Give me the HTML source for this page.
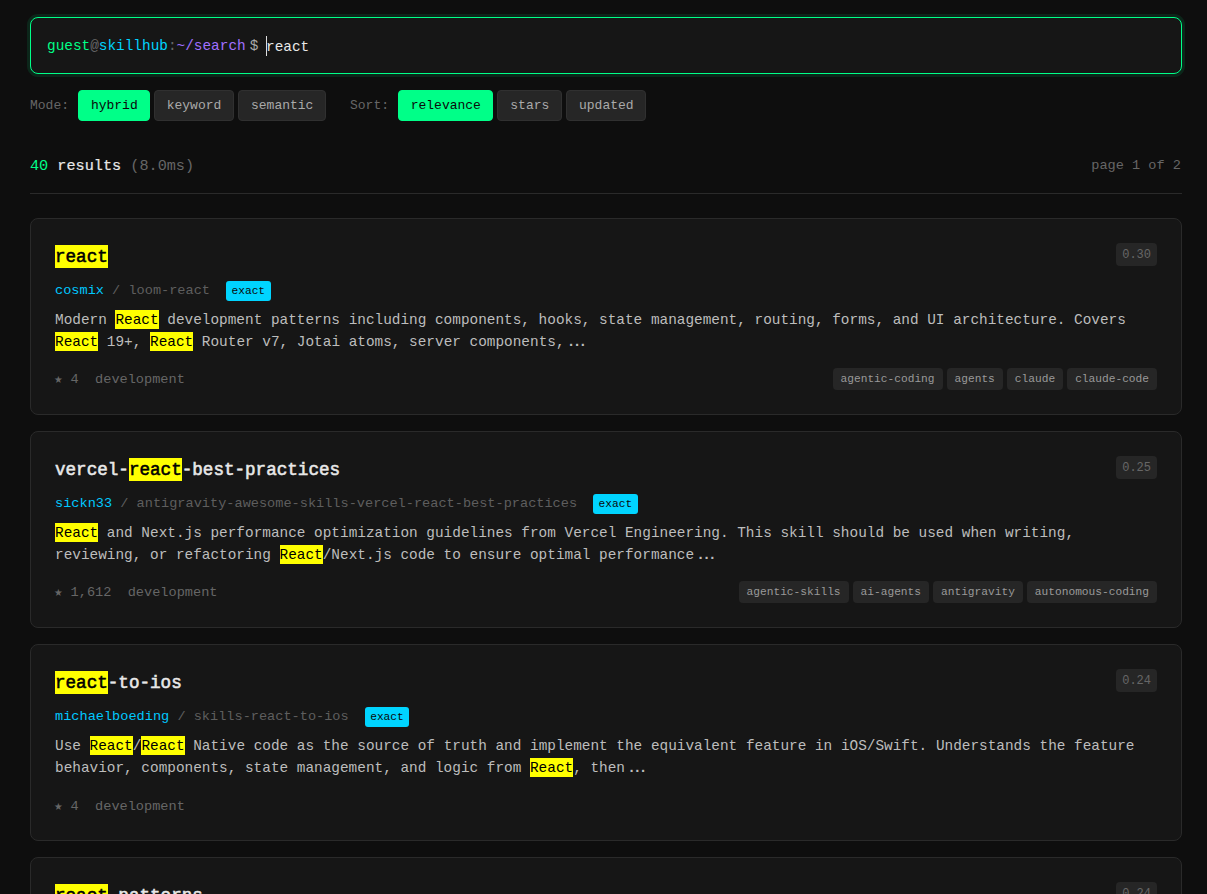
<!DOCTYPE html>
<html><head><meta charset="utf-8">
<style>
*{box-sizing:border-box;margin:0;padding:0}
html,body{width:1207px;height:894px;overflow:hidden;background:#0e0e0e}
body{font-family:"Liberation Mono",monospace;color:#c8c8c8;position:relative}
.abs{position:absolute}
.search{left:30px;top:17px;width:1152px;height:57px;border:1px solid #00ff88;border-radius:8px;background:#161616;box-shadow:0 0 0 3px rgba(0,255,136,0.10)}
.prompt{position:absolute;left:16px;top:1px;height:55px;line-height:55px;font-size:14.4px;white-space:pre}
.g{color:#00ff88}.at{color:#666}.c{color:#00d4ff}.p{color:#a070ff}.dl{color:#aaa}
.caret{display:inline-block;width:1px;height:20px;background:#ddd;vertical-align:middle;position:relative;top:0px}
.row{top:90px;left:30px;height:31px;font-size:13px}
.lbl{position:absolute;top:0;line-height:31px;color:#666}
.btn{position:absolute;top:0;height:31px;line-height:29px;border:1px solid #303030;background:#262626;color:#aaa;border-radius:4px;padding:0 12px;white-space:pre}
.btn.on{background:#00ff88;border-color:#00ff88;color:#0a0a0a}
.res{left:30px;top:155px;font-size:15.2px;line-height:22px;white-space:pre}
.res b{color:#00ff88;font-weight:normal}.res .w{color:#e8e8e8;-webkit-text-stroke:0.2px #e8e8e8}.res .m{color:#666}
.page{right:26px;top:155px;font-size:13.6px;line-height:22px;color:#666}
.hr{left:30px;top:193px;width:1152px;height:1px;background:#2a2a2a}
.card{left:30px;width:1152px;height:197px;border:1px solid #2a2a2a;border-radius:8px;background:#161616}
.title{position:absolute;left:24px;top:25px;font-size:17.6px;line-height:26px;font-weight:normal;-webkit-text-stroke:0.55px currentColor;color:#e8e8e8;white-space:pre}
mark{background:#ffff00;color:#000}
.title mark{padding:2px 0 1px}
.score{position:absolute;right:24px;top:24px;height:23px;line-height:25px;padding:0 6px;background:#262626;color:#666;border-radius:4px;font-size:12px}
.auth{position:absolute;left:24px;top:62px;height:20px;line-height:20px;font-size:13.6px;color:#5e5e5e;white-space:pre}
.auth .c{color:#00c8ff}
.exact{display:inline-block;height:20px;line-height:20px;padding:0 5.5px;background:#00d4ff;color:#0a0a0a;border-radius:3px;font-size:11.2px;vertical-align:top;margin-left:16px}
.desc{position:absolute;left:24px;top:89.5px;width:1104px;font-size:14.4px;line-height:22px;color:#bdbdbd;white-space:pre}
.desc mark{padding:1.5px 0}
.foot{position:absolute;left:23.3px;top:150px;height:22px;line-height:22px;font-size:13.6px;color:#666;white-space:pre}
.tags{position:absolute;right:24px;top:149px;height:22px;display:flex;gap:4px}
.tag{height:22px;line-height:22px;padding:0 8px;background:#262626;color:#999;border-radius:4px;font-size:11.2px;white-space:pre}
.ell{letter-spacing:-2.84px;padding:0 6.22px 0 2.3px;font-weight:bold}
.star{display:inline-block;width:8.16px;text-align:center}
</style></head><body>

<div class="abs search"><div class="prompt"><span class="g">guest</span><span class="at">@</span><span class="c">skillhub</span><span class="at">:</span><span class="p">~/search</span><span class="dl" style="margin-left:4px;margin-right:8px">$</span><span class="caret"></span><span style="color:#e8e8e8;position:relative;top:1px;margin-left:-1.3px">react</span></div></div>

<div class="abs row">
<span class="lbl" style="left:0">Mode:</span>
<span class="btn on" style="left:47.9px;width:72.3px">hybrid</span>
<span class="btn" style="left:123.7px;width:80.5px">keyword</span>
<span class="btn" style="left:208px;width:88px">semantic</span>
<span class="lbl" style="left:320px">Sort:</span>
<span class="btn on" style="left:367.7px;width:95.4px">relevance</span>
<span class="btn" style="left:467.3px;width:64.6px">stars</span>
<span class="btn" style="left:536px;width:79.8px">updated</span>
</div>

<div class="abs res"><b>40</b> <span class="w">results</span> <span class="m">(8.0ms)</span></div>
<div class="abs page">page 1 of 2</div>
<div class="abs hr"></div>

<div class="abs card" style="top:218px">
<div class="title"><mark>react</mark></div>
<div class="score">0.30</div>
<div class="auth"><span class="c">cosmix</span> / loom-react<span class="exact">exact</span></div>
<div class="desc">Modern <mark>React</mark> development patterns including components, hooks, state management, routing, forms, and UI architecture. Covers
<mark>React</mark> 19+, <mark>React</mark> Router v7, Jotai atoms, server components,<span class="ell">...</span></div>
<div class="foot"><span class="star">★</span> 4  development</div>
<div class="tags"><span class="tag">agentic-coding</span><span class="tag">agents</span><span class="tag">claude</span><span class="tag">claude-code</span></div>
</div>

<div class="abs card" style="top:431px">
<div class="title">vercel-<mark>react</mark>-best-practices</div>
<div class="score">0.25</div>
<div class="auth"><span class="c">sickn33</span> / antigravity-awesome-skills-vercel-react-best-practices<span class="exact">exact</span></div>
<div class="desc"><mark>React</mark> and Next.js performance optimization guidelines from Vercel Engineering. This skill should be used when writing,
reviewing, or refactoring <mark>React</mark>/Next.js code to ensure optimal performance<span class="ell">...</span></div>
<div class="foot"><span class="star">★</span> 1,612  development</div>
<div class="tags"><span class="tag">agentic-skills</span><span class="tag">ai-agents</span><span class="tag">antigravity</span><span class="tag">autonomous-coding</span></div>
</div>

<div class="abs card" style="top:644px">
<div class="title"><mark>react</mark>-to-ios</div>
<div class="score">0.24</div>
<div class="auth"><span class="c">michaelboeding</span> / skills-react-to-ios<span class="exact">exact</span></div>
<div class="desc">Use <mark>React</mark>/<mark>React</mark> Native code as the source of truth and implement the equivalent feature in iOS/Swift. Understands the feature
behavior, components, state management, and logic from <mark>React</mark>, then<span class="ell">...</span></div>
<div class="foot" style="top:151px"><span class="star">★</span> 4  development</div>
</div>

<div class="abs card" style="top:857px">
<div class="title"><mark>react</mark>-patterns</div>
<div class="score">0.24</div>
</div>

</body></html>
